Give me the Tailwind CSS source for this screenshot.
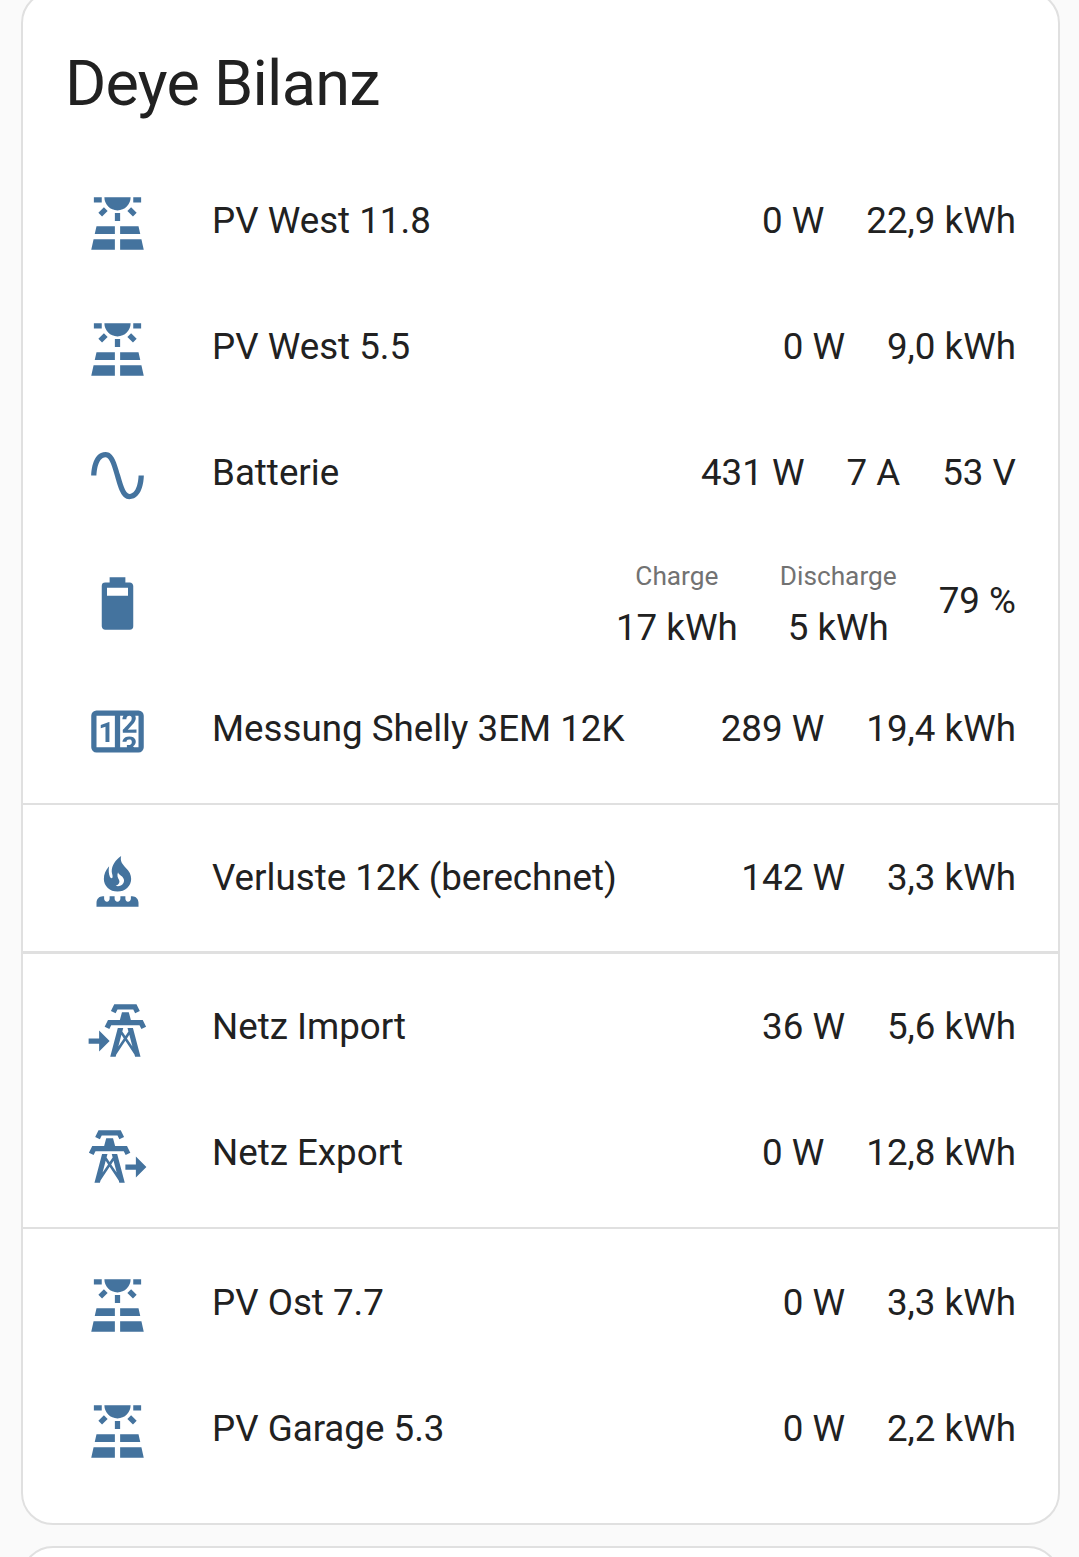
<!DOCTYPE html>
<html lang="de">

<head>
    <meta charset="UTF-8">
    <meta name="viewport" content="width=device-width, initial-scale=1.0">
    <title>Deye Bilanz</title>
    <script src="https://cdn.jsdelivr.net/npm/@tailwindcss/browser@4"></script>
</head>

<body class="h-[1557px] overflow-hidden bg-[#fafafa] font-['Roboto',sans-serif] text-[36.72px] leading-[52px] text-[#212121]">
    <!-- Icons -->
    <svg class="hidden">
        <symbol id="solar" viewBox="0 0 24 24">
            <path d="M3.33 16H11V13H4L3.33 16M13 16H20.67L20 13H13V16M21.11 18H13V22H22L21.11 18M2 22H11V18H2.89L2 22M11 8H13V11H11V8M15.76 7.21L17.18 5.79L19.3 7.91L17.89 9.33L15.76 7.21M4.71 7.91L6.83 5.79L8.24 7.21L6.12 9.33L4.71 7.91M3 2H6V4H3V2M18 2H21V4H18V2M12 7C14.76 7 17 4.76 17 2H7C7 4.76 9.24 7 12 7Z" />
        </symbol>
        <symbol id="sine" viewBox="0 0 24 24">
            <path d="M16.5,21C13.5,21 12.31,16.76 11.05,12.28C10.14,9.04 9,5 7.5,5C4.11,5 4,11.93 4,12H2C2,11.63 2.06,3 7.5,3C10.5,3 11.71,7.25 12.97,11.74C13.83,14.8 15,19 16.5,19C19.94,19 20.03,12.07 20.03,12H22.03C22.03,12.37 21.97,21 16.5,21Z" />
        </symbol>
        <symbol id="battery" viewBox="0 0 24 24">
            <path d="M16,9H8V6H16M16.67,4H15V2H9V4H7.33A1.33,1.33 0 0,0 6,5.33V20.67C6,21.4 6.6,22 7.33,22H16.67A1.33,1.33 0 0,0 18,20.67V5.33C18,4.6 17.4,4 16.67,4Z" />
        </symbol>
        <symbol id="counter" viewBox="0 0 24 24">
            <path d="M4,4H20A2,2 0 0,1 22,6V18A2,2 0 0,1 20,20H4A2,2 0 0,1 2,18V6A2,2 0 0,1 4,4M4,6V18H11V6H4M20,18V6H18.76C19,6.54 18.95,7.07 18.95,7.13C18.88,7.8 18.41,8.5 18.24,8.75L15.91,11.3L19.23,11.28L19.24,12.5L14.04,12.47L14,11.47C14,11.47 17.05,8.24 17.2,7.95C17.34,7.67 17.91,6 16.5,6C15.27,6.05 15.41,7.3 15.41,7.3L13.87,7.31C13.87,7.31 13.88,6.65 14.25,6H13V18H15.58L15.57,17.14L16.54,17.13C16.54,17.13 17.45,16.97 17.46,16.08C17.5,15.08 16.65,15.08 16.5,15.08C16.37,15.08 15.43,15.13 15.43,15.95H13.91C13.91,15.95 13.95,13.89 16.5,13.89C19.1,13.89 18.96,15.91 18.96,15.91C18.96,15.91 19,17.16 17.85,17.63L18.37,18H20M8.92,16H7.42V10.2L5.62,10.76V9.53L8.76,8.41H8.92V16Z" />
        </symbol>
        <symbol id="burner" viewBox="0 0 24 24">
            <path fill-rule="evenodd" d="M13.4 2.7C11.2 4.3 9.8 6.2 9.8 8.6C9.8 9.4 10.3 10.2 10.1 10.9C9.9 11.3 9.3 11.2 9.1 10.6C8.7 9.5 8.5 8.3 8.8 6.6C7.5 8 6.8 9.8 6.8 11.4C6.8 14.1 9.1 16.2 12 16.2C14.9 16.2 17.2 14.1 17.2 11.4C17.2 9.7 16.5 8.5 15.2 7.2C13.8 5.8 12.9 4.6 13.4 2.7M12.2 8.9C12.2 9.8 14.5 10.4 14.5 12C14.4 13.7 12.8 14.5 11.3 14C12.6 13.5 13 12.7 12.6 11.8C12.1 11 11.7 10.1 12.2 8.9Z" />
            <path d="M4 22V20.5C4 19.1 5 18 6.4 18H6.9V18.9C6.9 19.5 7.4 20.1 8 20.1S9 19.5 9 18.9V18H10.9V18.9C10.9 19.5 11.4 20.1 12 20.1S13.1 19.5 13.1 18.9V18H15V18.9C15 19.5 15.4 20.1 16 20.1S17.1 19.5 17.1 18.9V18H17.6C19 18 20 19.1 20 20.5V22Z" />
        </symbol>
        <symbol id="tower" viewBox="0 0 24 24">
            <path d="M8.28,5.45L6.5,4.55L7.76,2H16.23L17.5,4.55L15.72,5.44L15,4H9L8.28,5.45M18.62,8H14.09L13.3,5H10.7L9.91,8H5.38L4.1,10.55L5.89,11.44L6.62,10H17.38L18.1,11.45L19.89,10.56L18.62,8M17.77,22H15.7L15.46,21.1L12,15.9L8.53,21.1L8.3,22H6.23L9.12,11H11.19L10.83,12.35L12,14.1L13.16,12.35L12.81,11H14.88L17.77,22M11.4,15L10.5,13.65L9.32,18.13L11.4,15M14.68,18.12L13.5,13.64L12.6,15L14.68,18.12Z" />
        </symbol>
        <symbol id="import" viewBox="0 0 24 24">
            <use href="#tower" x="3" width="24" height="24" />
            <path d="M1 15H5V12L9 16L5 20V17H1Z" />
        </symbol>
        <symbol id="export" viewBox="0 0 24 24">
            <use href="#tower" x="-3" width="24" height="24" />
            <path d="M15 15H19V12L23 16L19 20V17H15Z" />
        </symbol>
    </svg>

    <!-- Card -->
    <main class="ml-[21px] -mt-[9px] h-[1534px] w-[1039px] rounded-[32px] border-2 border-[#e0e0e0] bg-white">
        <h1 class="px-[42px] pt-[38px] text-[63px] leading-[105px] tracking-[-0.012em]">Deye Bilanz</h1>

        <div class="mt-[35px] flex flex-col gap-[21px]">
            <div class="flex h-[105px] items-center px-[42px]">
                <svg class="ml-[21px] size-[63px] shrink-0 fill-[#44739e]"><use href="#solar" /></svg>
                <div class="ml-[63px] flex flex-1 justify-between pb-[6px]">
                    <span>PV West 11.8</span>
                    <div class="flex gap-[42px]"><span>0 W</span><span>22,9 kWh</span></div>
                </div>
            </div>
            <div class="flex h-[105px] items-center px-[42px]">
                <svg class="ml-[21px] size-[63px] shrink-0 fill-[#44739e]"><use href="#solar" /></svg>
                <div class="ml-[63px] flex flex-1 justify-between pb-[6px]">
                    <span>PV West 5.5</span>
                    <div class="flex gap-[42px]"><span>0 W</span><span>9,0 kWh</span></div>
                </div>
            </div>
            <div class="flex h-[105px] items-center px-[42px]">
                <svg class="ml-[21px] size-[63px] shrink-0 fill-[#44739e]"><use href="#sine" /></svg>
                <div class="ml-[63px] flex flex-1 justify-between pb-[6px]">
                    <span>Batterie</span>
                    <div class="flex gap-[42px]"><span>431 W</span><span>7 A</span><span>53 V</span></div>
                </div>
            </div>
            <div class="flex h-[109px] items-center px-[42px]">
                <svg class="ml-[21px] size-[63px] shrink-0 fill-[#44739e]"><use href="#battery" /></svg>
                <div class="ml-[63px] flex flex-1 items-center justify-end gap-[42px] pb-[6px] text-center">
                    <div class="pt-[2px]">
                        <div class="text-[26.25px] text-[#727272]">Charge</div>
                        <div>17 kWh</div>
                    </div>
                    <div class="pt-[2px]">
                        <div class="text-[26.25px] text-[#727272]">Discharge</div>
                        <div>5 kWh</div>
                    </div>
                    <span>79 %</span>
                </div>
            </div>
            <div class="flex h-[105px] items-center px-[42px]">
                <svg class="ml-[21px] size-[63px] shrink-0 fill-[#44739e]"><use href="#counter" /></svg>
                <div class="ml-[63px] flex flex-1 justify-between pb-[6px]">
                    <span>Messung Shelly 3EM 12K</span>
                    <div class="flex gap-[42px]"><span>289 W</span><span>19,4 kWh</span></div>
                </div>
            </div>
            <hr class="-mt-[2px] mb-[2px] border-t-2 border-[#e0e0e0]">
            <div class="flex h-[105px] items-center px-[42px]">
                <svg class="ml-[21px] size-[63px] shrink-0 fill-[#44739e]"><use href="#burner" /></svg>
                <div class="ml-[63px] flex flex-1 justify-between pb-[6px]">
                    <span>Verluste 12K (berechnet)</span>
                    <div class="flex gap-[42px]"><span>142 W</span><span>3,3 kWh</span></div>
                </div>
            </div>
            <hr class="-mt-[3px] mb-[3px] border-t-3 border-[#e0e0e0]">
            <div class="flex h-[105px] items-center px-[42px]">
                <svg class="ml-[21px] size-[63px] shrink-0 fill-[#44739e]"><use href="#import" /></svg>
                <div class="ml-[63px] flex flex-1 justify-between pb-[7px]">
                    <span>Netz Import</span>
                    <div class="flex gap-[42px]"><span>36 W</span><span>5,6 kWh</span></div>
                </div>
            </div>
            <div class="flex h-[105px] items-center px-[42px]">
                <svg class="ml-[21px] size-[63px] shrink-0 fill-[#44739e]"><use href="#export" /></svg>
                <div class="ml-[63px] flex flex-1 justify-between pb-[7px]">
                    <span>Netz Export</span>
                    <div class="flex gap-[42px]"><span>0 W</span><span>12,8 kWh</span></div>
                </div>
            </div>
            <hr class="-mt-[3px] mb-[3px] border-t-2 border-[#e0e0e0]">
            <div class="flex h-[105px] items-center px-[42px]">
                <svg class="ml-[21px] size-[63px] shrink-0 fill-[#44739e]"><use href="#solar" /></svg>
                <div class="ml-[63px] flex flex-1 justify-between pb-[6px]">
                    <span>PV Ost 7.7</span>
                    <div class="flex gap-[42px]"><span>0 W</span><span>3,3 kWh</span></div>
                </div>
            </div>
            <div class="flex h-[105px] items-center px-[42px]">
                <svg class="ml-[21px] size-[63px] shrink-0 fill-[#44739e]"><use href="#solar" /></svg>
                <div class="ml-[63px] flex flex-1 justify-between pb-[6px]">
                    <span>PV Garage 5.3</span>
                    <div class="flex gap-[42px]"><span>0 W</span><span>2,2 kWh</span></div>
                </div>
            </div>
        </div>
    </main>

    <!-- Next card -->
    <div class="mt-[21px] h-[11px] overflow-hidden">
        <section class="ml-[21px] h-[80px] w-[1039px] rounded-[32px] border-2 border-[#e0e0e0] bg-white"></section>
    </div>
</body>

</html>
